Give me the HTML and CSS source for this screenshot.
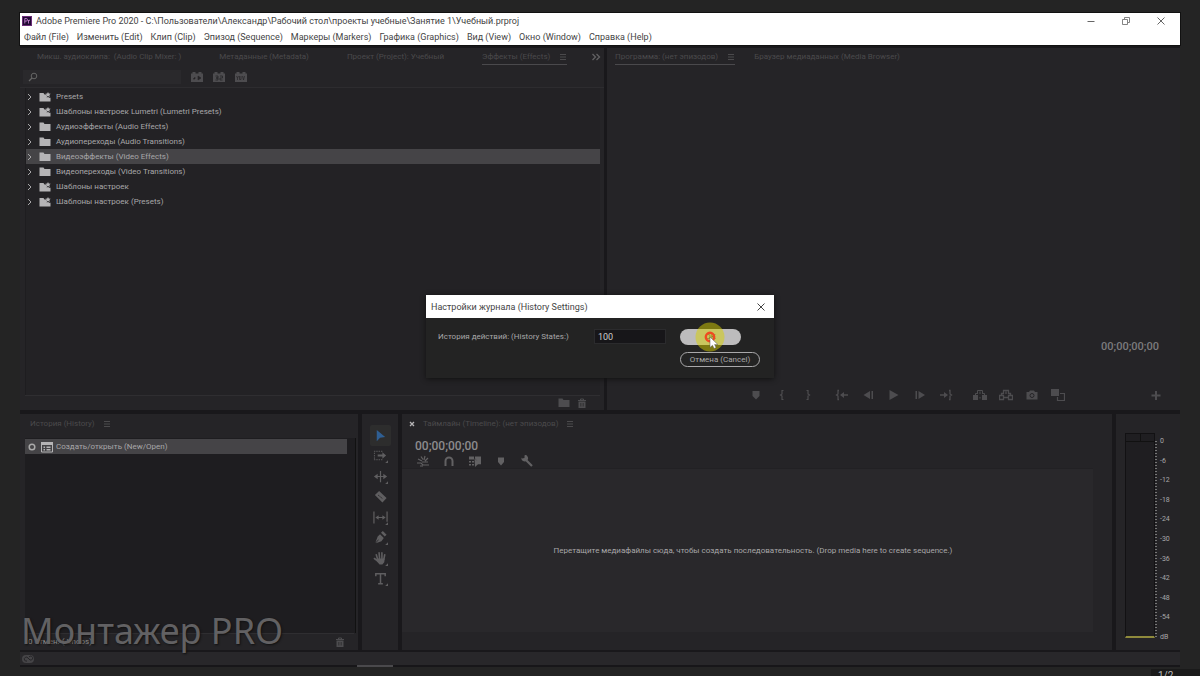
FILE: index.html
```html
<!DOCTYPE html>
<html lang="ru">
<head>
<meta charset="utf-8">
<title>Adobe Premiere Pro 2020</title>
<link rel="stylesheet" href="styles.css">
</head>
<body>
<svg class="defs" aria-hidden="true">
  <symbol id="chev" viewBox="0 0 8 10"><path d="M2 2 5 5 2 8" fill="none" stroke="currentColor"/></symbol>
  <symbol id="folder" viewBox="0 0 12 10"><path d="M.5 .5h4l1 1.500h6V9H.5z" fill="currentColor"/></symbol>
  <symbol id="preset" viewBox="0 0 12 10"><path d="M.5 1h4l1 1.500h1.200L8 4l-.3 1.500L9 5l2 1 .5-.5V9.500H.5z" fill="currentColor"/><path d="m9 0 .8 1.500 1.900.2-1.300 1.300.4 1.900L9 4l-1.800.9.4-1.900-1.300-1.300 1.900-.2z" fill="currentColor"/></symbol>
  <symbol id="menu" viewBox="0 0 8 8"><path d="M1 1.500h6M1 4h6M1 6.500h6" stroke="currentColor"/></symbol>
  <symbol id="trash" viewBox="0 0 10 10"><path d="M1 2.500h8M3.500 2V1h3v1" fill="none" stroke="currentColor"/><path d="M1.500 3.500h7V10h-7z" fill="currentColor"/><path d="M3.500 5v3.500M5 5v3.500M6.500 5v3.500" stroke="#252427" stroke-width=".5"/></symbol>
  <symbol id="bin" viewBox="0 0 12 10"><path d="M0 1.500h1.500V0h3v1.500h3V0h3v1.500H12V10H0z" fill="currentColor"/></symbol>
</svg>

<div class="app">
  <header class="window-head">
    <div class="title-bar">
      <svg class="logo" viewBox="0 0 10 10"><rect width="10" height="10" fill="#210a33"/><rect x=".5" y=".5" width="9" height="9" fill="none" stroke="#6b2c78"/><path d="M2.800 7.500v-5h1.400q1.300 0 1.300 1.300T4.200 5.100H2.800M6.500 7.500V4m0 1.300q.3-1.200 1.500-1.200" fill="none" stroke="#d58be0" stroke-width=".8"/></svg>
      <h1>Adobe Premiere Pro 2020 - C:\Пользователи\Александр\Рабочий стол\проекты учебные\Занятие 1\Учебный.prproj</h1>
      <div class="window-buttons">
        <button aria-label="Свернуть"><svg viewBox="0 0 10 10"><path d="M1.500 5.500h7" stroke="currentColor"/></svg></button>
        <button aria-label="Восстановить"><svg viewBox="0 0 10 10"><path d="M1.500 3.500h5v5h-5zM3.500 3V1.500h5v5H7" fill="none" stroke="currentColor" stroke-width=".8"/></svg></button>
        <button aria-label="Закрыть"><svg viewBox="0 0 10 10"><path d="m1.500 1.500 7 7m0-7-7 7" stroke="currentColor"/></svg></button>
      </div>
    </div>
    <nav class="menu-bar">
      <button>Файл (File)</button><button>Изменить (Edit)</button><button>Клип (Clip)</button><button>Эпизод (Sequence)</button><button>Маркеры (Markers)</button><button>Графика (Graphics)</button><button>Вид (View)</button><button>Окно (Window)</button><button>Справка (Help)</button>
    </nav>
  </header>

  <main class="workspace">
    <div class="row-top">
      <section class="panel effects">
        <div class="tabs">
          <button class="tab">Микш. аудиоклипа: &nbsp;(Audio Clip Mixer: )</button>
          <button class="tab">Метаданные (Metadata)</button>
          <button class="tab">Проект (Project): Учебный</button>
          <button class="tab on">Эффекты (Effects)<svg><use href="#menu"/></svg></button>
          <button class="more" aria-label="Ещё"><svg viewBox="0 0 10 8"><path d="m1.500 1 3 3-3 3m4-6 3 3-3 3" fill="none" stroke="currentColor" stroke-width="1.300"/></svg></button>
        </div>
        <div class="search-row">
          <label class="search"><svg viewBox="0 0 10 10"><circle cx="6" cy="4" r="2.800" fill="none" stroke="currentColor"/><path d="M4 6 1 9" stroke="currentColor" stroke-width="1.200"/></svg><input type="text" aria-label="Поиск"></label>
          <button class="filter" aria-label="Ускоренные"><svg viewBox="0 0 12 10"><use href="#bin"/><path d="M2 7h2V5m3-1v4l3-2z" fill="#252427" stroke="#252427" stroke-width=".6"/></svg></button>
          <button class="filter" aria-label="32 бита"><svg viewBox="0 0 12 10"><use href="#bin"/><path d="M2.500 4H5v2H3h2v2H2.500M7 4h2.500v2H7v2h2.500" fill="none" stroke="#252427" stroke-width=".8"/></svg></button>
          <button class="filter" aria-label="YUV"><svg viewBox="0 0 12 10"><use href="#bin"/><path d="m1.500 4 1 2v2m0-2 1-2m1 0v3.500h1.500V4m1.500 0 1 4 1-4" fill="none" stroke="#252427" stroke-width=".7"/></svg></button>
        </div>
        <ul class="tree">
          <li><svg class="chev"><use href="#chev"/></svg><svg class="ico"><use href="#preset"/></svg>Presets</li>
          <li><svg class="chev"><use href="#chev"/></svg><svg class="ico"><use href="#preset"/></svg>Шаблоны настроек Lumetri (Lumetri Presets)</li>
          <li><svg class="chev"><use href="#chev"/></svg><svg class="ico"><use href="#folder"/></svg>Аудиоэффекты (Audio Effects)</li>
          <li><svg class="chev"><use href="#chev"/></svg><svg class="ico"><use href="#folder"/></svg>Аудиопереходы (Audio Transitions)</li>
          <li class="sel"><svg class="chev"><use href="#chev"/></svg><svg class="ico"><use href="#folder"/></svg>Видеоэффекты (Video Effects)</li>
          <li><svg class="chev"><use href="#chev"/></svg><svg class="ico"><use href="#folder"/></svg>Видеопереходы (Video Transitions)</li>
          <li><svg class="chev"><use href="#chev"/></svg><svg class="ico"><use href="#preset"/></svg>Шаблоны настроек</li>
          <li><svg class="chev"><use href="#chev"/></svg><svg class="ico"><use href="#preset"/></svg>Шаблоны настроек (Presets)</li>
        </ul>
        <div class="panel-foot effects-foot">
          <button aria-label="Новая папка"><svg viewBox="0 0 12 10"><use href="#folder"/></svg></button>
          <button aria-label="Удалить"><svg viewBox="0 0 10 10"><use href="#trash"/></svg></button>
        </div>
      </section>

      <section class="panel program">
        <div class="tabs">
          <button class="tab on">Программа: (нет эпизодов)<svg><use href="#menu"/></svg></button>
          <button class="tab">Браузер медиаданных (Media Browser)</button>
        </div>
        <div class="program-time">00;00;00;00</div>
        <div class="transport">
          <div class="group">
            <button aria-label="Маркер"><svg viewBox="0 0 14 12"><path d="M3.500 2h7v5L7 10.500 3.500 7z" fill="currentColor"/></svg></button>
            <button aria-label="Точка входа"><svg viewBox="0 0 14 12"><path d="M8.500 1.500H7v3.500L5.500 6 7 7v3.500h1.500" fill="none" stroke="currentColor" stroke-width="1.200"/></svg></button>
            <button aria-label="Точка выхода"><svg viewBox="0 0 14 12"><path d="M5.500 1.500H7v3.500L8.500 6 7 7v3.500H5.500" fill="none" stroke="currentColor" stroke-width="1.200"/></svg></button>
          </div>
          <div class="group">
            <button aria-label="К точке входа"><svg viewBox="0 0 14 12"><path d="M4 1.500H3V5L1.500 6 3 7v3.500h1M6 6h7" fill="none" stroke="currentColor" stroke-width="1.300"/><path d="M5 6l4-3v6z" fill="currentColor"/></svg></button>
            <button aria-label="Кадр назад"><svg viewBox="0 0 14 12"><path d="M9 2v8L2.500 6zM10.500 2H12v8h-1.500z" fill="currentColor"/></svg></button>
            <button aria-label="Воспроизведение"><svg viewBox="0 0 14 12"><path d="M2.500 1v10l9-5z" fill="currentColor"/></svg></button>
            <button aria-label="Кадр вперёд"><svg viewBox="0 0 14 12"><path d="M5.500 2v8L12 6zM2.500 2H4v8H2.500z" fill="currentColor"/></svg></button>
            <button aria-label="К точке выхода"><svg viewBox="0 0 14 12"><path d="M10 1.500h1V5l1.500 1L11 7v3.500h-1M1 6h7" fill="none" stroke="currentColor" stroke-width="1.300"/><path d="M9 6 5 3v6z" fill="currentColor"/></svg></button>
          </div>
          <div class="group">
            <button aria-label="Поднять"><svg viewBox="0 0 14 12"><path d="M0 6h5v5H0zM9 6h5v5H9z" fill="currentColor"/><path d="M4.500 5V1.500h5V5M2.500 6V4.500h2m5 0h2V6M7 2.500V5M7 8v1.500" fill="none" stroke="currentColor"/></svg></button>
            <button aria-label="Извлечь"><svg viewBox="0 0 14 12"><path d="M.5 6.500h4v4h-4zM9.500 6.500h4v4h-4zM4.500 5V1.500h5V5M2.500 6V4.500h2m5 0h2V6M7 2.500V5M5 8.500h4" fill="none" stroke="currentColor" stroke-width="1.300"/></svg></button>
            <button aria-label="Экспорт кадра"><svg viewBox="0 0 14 12"><path d="M1.500 3H4l1-1.500h4L10 3h2.500v7.500h-11z" fill="currentColor"/><circle cx="7" cy="6.500" r="2" fill="none" stroke="#252427"/></svg></button>
            <button aria-label="Сравнение"><svg viewBox="0 0 14 12"><path d="M0 0h8v7H0z" fill="currentColor"/><path d="M9 4.500h4.500v7h-7V8" fill="none" stroke="currentColor" stroke-width="1.200"/></svg></button>
          </div>
          <button class="plus" aria-label="Редактор кнопок"><svg viewBox="0 0 14 12"><path d="M7 2v9M2.500 6.500h9" stroke="currentColor" stroke-width="2"/></svg></button>
        </div>
      </section>
    </div>

    <div class="row-bottom">
      <section class="panel history">
        <div class="panel-title">История (History)<svg><use href="#menu"/></svg></div>
        <ul class="history-list">
          <li><svg class="ring" viewBox="0 0 8 8"><circle cx="4" cy="4" r="2.800" fill="none" stroke="currentColor" stroke-width="1.500"/></svg><svg class="doc" viewBox="0 0 12 12"><path d="M.5 1.500h11v9.500H.5z" fill="none" stroke="currentColor"/><path d="M0 1h12v3H0zM2.500 5.500h1.500V7H2.500zM2.500 8h1.500v1.500H2.500zM5.500 5.500h4V7h-4zM5.500 8h4v1.500h-4z" fill="currentColor"/></svg>Создать/открыть (New/Open)</li>
        </ul>
        <div class="panel-foot history-foot">
          <span>0 отмен. ( Undos)</span>
          <button aria-label="Удалить"><svg viewBox="0 0 10 10"><use href="#trash"/></svg></button>
        </div>
      </section>

      <section class="panel tools">
        <div class="tool-list">
        <button class="active" aria-label="Выделение"><svg viewBox="0 0 16 16"><path d="M4 2v12l3.500-3.500L13 9.500z" fill="currentColor"/></svg></button>
        <button aria-label="Выбор дорожки"><svg viewBox="0 0 16 16"><path d="M1 3.500h9M1 12.500h9M1.500 5v7" fill="none" stroke="currentColor" stroke-dasharray="1.500 1"/><path d="M5 7h5V4.500L14 8l-4 3.500V9H5zM16 13v3h-3z" fill="currentColor"/></svg></button>
        <button aria-label="Монтаж со сдвигом"><svg viewBox="0 0 16 16"><path d="M8 2v12M2 8h12" stroke="currentColor" stroke-width="1.300"/><path d="m1 8 4-3v6zM15 8l-4-3v6zM16 13v3h-3z" fill="currentColor"/></svg></button>
        <button aria-label="Подрезка"><svg viewBox="0 0 16 16"><path d="m6.500 2 8 7.500-4.500 5-8-8z" fill="currentColor"/><path d="m5.500 6.500 5 4" stroke="#252427" stroke-dasharray="2 1"/></svg></button>
        <button aria-label="Скольжение"><svg viewBox="0 0 16 16"><path d="M1 1.500v13M15 1.500v11M4 8h8" stroke="currentColor" stroke-width="1.300"/><path d="m2.500 8 3.500-2.500v5zM13.500 8 10 5.500v5zM16 13v3h-3z" fill="currentColor"/></svg></button>
        <button aria-label="Перо"><svg viewBox="0 0 16 16"><path d="m10.500 1 4 4-2 2-4-4zM7.500 4.500l4 4-2.500 3.500-6 2 3.500-4-1 .5-3 3 2.500-6.500zM16 13v3h-3z" fill="currentColor"/></svg></button>
        <button aria-label="Рука"><svg viewBox="0 0 16 16"><path d="M5 9 3.500 4M7 8 6.500 2M9.500 8V2M11.500 9l1-5M5.500 11 1.500 8" stroke="currentColor" stroke-width="1.700" stroke-linecap="round"/><path d="M4.500 8h8L12 12l-2 2.500H7L4 11zM16 13v3h-3z" fill="currentColor"/></svg></button>
        <button aria-label="Текст"><svg viewBox="0 0 16 16"><path d="M3 5.500V3h10v2.500M8 3v10.500M5.500 13.500h5" fill="none" stroke="currentColor" stroke-width="1.600"/><path d="M16 13v3h-3z" fill="currentColor"/></svg></button>
        </div>
      </section>

      <section class="panel timeline">
        <div class="panel-title"><button class="close" aria-label="Закрыть"><svg viewBox="0 0 6 6"><path d="m1 1 4 4m0-4L1 5" stroke="currentColor" stroke-width="1.300"/></svg></button>Таймлайн (Timeline): (нет эпизодов)<svg><use href="#menu"/></svg></div>
        <div class="timecode">00;00;00;00</div>
        <div class="timeline-tools">
          <button aria-label="Вложенность"><svg viewBox="0 0 12 12"><path d="M0 8h4l2 2h6M1 4l4 2M4 1.500l2 3M8 1 7 5M11 3 8 6M5 7h6M3 11h3" fill="none" stroke="currentColor" stroke-width="1.200"/></svg></button>
          <button aria-label="Привязка"><svg viewBox="0 0 12 12"><path d="M2.500 11V6a3.500 3.500 0 0 1 7 0v5" fill="none" stroke="currentColor" stroke-width="2"/></svg></button>
          <button aria-label="Связь"><svg viewBox="0 0 12 12"><path d="M0 1.500h5v3H0zM6 1.500h6v8L6 3.500zM0 6h2v1.500H0zM3 6h2v1.500H3zM0 9h2v1.500H0zM3 9h2v1.500H3zM5.500 3.500 12 9l-3 .3L6 12z" fill="currentColor"/></svg></button>
          <button aria-label="Маркер"><svg viewBox="0 0 12 12"><path d="M3 2.500h6V7l-3 3.500L3 7z" fill="currentColor"/></svg></button>
          <button aria-label="Настройки"><svg viewBox="0 0 12 12"><path d="M5 5l6 6" stroke="currentColor" stroke-width="2.200"/><path d="M3.500.5 3.500 3 1 3.500.5 2.500Q0 5 2 6t4-.5.5-4-3-1z" fill="currentColor"/></svg></button>
        </div>
        <div class="timeline-body"><p>Перетащите медиафайлы сюда, чтобы создать последовательность. (Drop media here to create sequence.)</p></div>
      </section>

      <section class="panel meter">
        <div class="bar"></div>
        <div class="ticks"></div>
        <ol class="scale"><li>0</li><li>-6</li><li>-12</li><li>-18</li><li>-24</li><li>-30</li><li>-36</li><li>-42</li><li>-48</li><li>-54</li><li>dB</li></ol>
      </section>
    </div>
  </main>

  <footer class="status">
    <svg viewBox="0 0 12 10"><rect y="1" width="12" height="8" rx="4" fill="currentColor"/><path d="M5 7a2 2 0 1 1 1-3l2 2a2 2 0 1 0-1-3" fill="none" stroke="#252427"/></svg>
  </footer>
</div>
<div class="page-edge"><span>1/2</span></div>

<section class="dialog" role="dialog" aria-labelledby="dlg-title">
  <header><h2 id="dlg-title">Настройки журнала (History Settings)</h2><button aria-label="Закрыть"><svg viewBox="0 0 10 10"><path d="m1.500 1.500 7 7m0-7-7 7" stroke="currentColor"/></svg></button></header>
  <form>
    <label for="states">История действий: (History States:)</label>
    <input id="states" type="text" value="100">
    <div class="actions">
      <button type="button" class="ok">OK<svg class="click" viewBox="0 0 30 30"><circle cx="15" cy="15" r="14.500" fill="#d8d000" opacity=".5"/><circle cx="15" cy="15" r="4.200" fill="none" stroke="#f04a20" stroke-width="2.400"/><path d="M15 15v10.500l2.500-2.200 1.600 3.200 2-1-1.500-3h3.200z" fill="#fff" stroke="#555" stroke-width=".5"/></svg></button>
      <button type="button" class="cancel">Отмена (Cancel)</button>
    </div>
  </form>
</section>
<div class="watermark">Монтажер PRO</div>
</body>
</html>
```

FILE: styles.css
```css
:root {
  --panel: #252427;
  --gap: #19181b;
  --dim: #4b4a4c;
  --icon: #4d4c4f;
  --text: #a8a7a9;
  --font: Roboto, "Noto Sans", sans-serif;
}
* { box-sizing: border-box; }
body {
  margin: 0;
  height: 100vh;
  overflow: hidden;
  display: flex;
  flex-direction: column;
  background: #242424;
  color: var(--text);
  font: 8px/14px var(--font);
}
button { margin: 0; padding: 0; border: 0; background: none; color: inherit; font: inherit; white-space: nowrap; }
svg { display: block; flex: none; }
ul, ol { list-style: none; margin: 0; padding: 0; }
h1, h2, p { margin: 0; font: inherit; }
.defs { position: absolute; width: 0; height: 0; }

.app { flex: 1; min-height: 0; margin: 13px 20px 0; display: flex; flex-direction: column; background: var(--gap); }

.window-head { background: #fff; color: #444; font: 9px/16px var(--font); box-shadow: 0 0 0 1px #111; }
.title-bar { display: flex; align-items: center; gap: 4px; padding-left: 2px; }
.title-bar h1 { flex: 1; white-space: nowrap; }
.logo { width: 10px; height: 10px; }
.window-buttons { display: flex; padding-right: 2px; }
.window-buttons button { width: 35px; height: 16px; display: grid; place-items: center; color: #666; }
.window-buttons svg { width: 10px; height: 10px; }
.menu-bar { display: flex; gap: 8px; padding-left: 4px; }

.workspace { flex: 1; min-height: 0; display: flex; flex-direction: column; gap: 4px; padding-top: 3px; }
.row-top { flex: 362; min-height: 0; display: grid; grid-template-columns: 584fr 573fr; gap: 3px; }
.row-bottom { flex: 236; min-height: 0; display: grid; grid-template-columns: 338fr 36px 710fr 64px; gap: 4px; }
.panel { min-width: 0; min-height: 0; background: var(--panel); display: flex; flex-direction: column; }

.tabs { display: flex; height: 20px; color: var(--dim); padding: 1px 3px 0 17px; }
.tab { display: flex; gap: 9px; height: 16px; align-items: center; border-bottom: 1px solid transparent; }
.tab + .tab { margin-left: 38px; }
.tab svg, .panel-title svg { width: 8px; height: 8px; }
.tab.on { border-color: #4a494c; }
.more { margin-left: auto; height: 16px; color: #626163; }
.more svg { width: 10px; height: 8px; }
.program .tabs { padding-left: 8px; }
.program .tab + .tab { margin-left: 19px; }

.search-row { display: flex; align-items: center; gap: 10px; height: 20px; padding: 0 0 2px 3px; border-bottom: 1px solid #2d2c2f; color: var(--icon); }
.search { width: 158px; height: 14px; background: #2a292c; display: flex; align-items: center; padding-left: 5px; color: #666; }
.search svg { width: 10px; height: 10px; }
.search input { flex: 1; min-width: 0; background: none; border: 0; }
.filter svg { width: 12px; height: 10px; }

.tree { flex: 1; margin: 0 4px 0 5px; padding-top: 1px; border-left: 1px solid #1e1d20; background: #232225; }
.tree li { height: 15px; display: flex; align-items: center; }
.tree .chev { width: 8px; height: 10px; margin-right: 5px; }
.tree .ico { width: 12px; height: 10px; margin-right: 5px; color: #b5b4b6; }
.tree .sel { background: #454447; }

.panel-foot { height: 15px; display: flex; align-items: center; color: var(--icon); border-top: 1px solid #2f2e31; margin: 0 4px 0 5px; }
.effects-foot { justify-content: flex-end; gap: 8px; padding-right: 12px; }
.effects-foot svg { height: 10px; }
.panel-foot button { width: 11px; }

.program-time { margin: auto 21px 0 auto; font: 500 11px/14px var(--font); color: #7c7b7d; }
.transport { margin-top: 26px; height: 30px; display: flex; align-items: center; gap: 8px; padding: 0 11px 0 136px; color: var(--icon); }
.group { display: flex; }
.transport button { width: 26px; display: grid; place-items: center; }
.transport svg { width: 14px; height: 12px; }
.plus { margin-left: auto; }

.panel-title { display: flex; align-items: center; gap: 8px; height: 20px; color: var(--dim); padding-left: 10px; }
.history-list { flex: 1; margin: 4px 2px 0 5px; padding: 1px 8px 0 0; background: #1e1d20; border-right: 1px solid #111; }
.history-list li { display: flex; align-items: center; height: 15px; background: #454447; padding-left: 3px; }
.ring { width: 8px; height: 8px; margin-right: 5px; color: #aaa; }
.doc { width: 12px; height: 12px; margin-right: 3px; color: #b5b4b6; }
.history-foot { height: 17px; justify-content: space-between; padding: 0 8px 0 3px; color: #888; }
.history-foot button { color: var(--icon); }
.history-foot svg { height: 10px; }

.tools { padding-top: 11px; align-items: center; color: #5f5e60; }
.tool-list { height: 164px; display: grid; grid-template-rows: repeat(8, 1fr); }
.tools button { width: 21px; display: grid; place-items: center; border-radius: 2px; }
.tools svg { width: 15px; height: 15px; }
.tools .active { background: #2d2d2d; color: #2f5f93; }

.close { color: #b5b4b6; }
.panel-title .close svg { width: 6px; height: 6px; }
.timeline .panel-title { padding-left: 7px; }
.timecode { margin: 4px 0 0 13px; font: 500 12px/16px var(--font); color: #8c8b8d; }
.timeline-tools { display: flex; gap: 14px; height: 14px; align-items: center; padding-left: 15px; color: #626163; }
.timeline-tools svg { width: 12px; height: 12px; }
.timeline-body { flex: 1; margin: 0 19px 18px 0; padding-left: 11px; background: #29282b; border-top: 1px solid #222124; display: grid; place-items: center; }

.meter { flex-direction: row; padding: 19px 4px 12px 9px; }
.bar { width: 30px; background: linear-gradient(#111, #111) 14px 0 / 1px 7px no-repeat, linear-gradient(#111, #111) 0 7px / 100% 1px no-repeat, #1f1e21; border: 1px solid #121113; border-bottom: 2px solid #8f8a3c; }
.ticks { width: 2px; margin: 8px 3px 0 0; background: repeating-linear-gradient(#777 0 1px, transparent 1px 3px); }
.scale { flex: 1; display: flex; flex-direction: column; justify-content: space-between; margin: 4px 0 -3px; font: 7px/8px var(--font); }

.status { position: relative; height: 15px; margin-top: 2px; background: #28272a; border-bottom: 2px solid #171619; display: flex; align-items: center; padding-left: 2px; color: #454447; }
.status::after { content: ""; position: absolute; left: 337px; bottom: -2px; width: 36px; height: 2px; background: #4a494c; }
.status svg { width: 12px; height: 10px; }
.page-edge { flex: none; height: 9px; overflow: hidden; display: flex; justify-content: flex-end; }
.page-edge span { height: 20px; width: 49px; margin-top: 2px; padding-left: 7px; background: #1a1a1a; color: #bbb; font: 10px/14px var(--font); }

.dialog { position: absolute; top: 295px; left: 50%; width: 348px; transform: translateX(-50%); background: #232323; box-shadow: 0 1px 5px #111; }
.dialog header { height: 23px; background: #fff; color: #444; font: 9px/22px var(--font); display: flex; justify-content: space-between; align-items: center; padding: 0 8px 0 5px; }
.dialog header svg { width: 10px; height: 10px; }
.dialog form { display: flex; align-items: flex-start; padding: 11px 14px 11px 12px; }
.dialog label { width: 156px; line-height: 16px; white-space: nowrap; }
.dialog input { width: 72px; height: 15px; border: 1px solid #2b2b2d; background: #171619; color: #ccc; font: 9px/13px var(--font); padding: 0 3px; }
.actions { margin-left: 14px; display: flex; flex-direction: column; align-items: flex-start; gap: 7px; }
.ok { position: relative; width: 61px; height: 16px; border-radius: 8px; background: #bdbcbd; color: #333; }
.click { position: absolute; left: 15px; top: -7px; width: 30px; height: 30px; }
.cancel { width: 80px; height: 15px; border: 1px solid #a9a8aa; border-radius: 8px; line-height: 13px; }

.watermark { position: absolute; left: 21px; bottom: 19px; font: 36px/52px "Noto Sans", sans-serif; color: #626163; text-shadow: 1px 1px 2px #111; pointer-events: none; }
```
